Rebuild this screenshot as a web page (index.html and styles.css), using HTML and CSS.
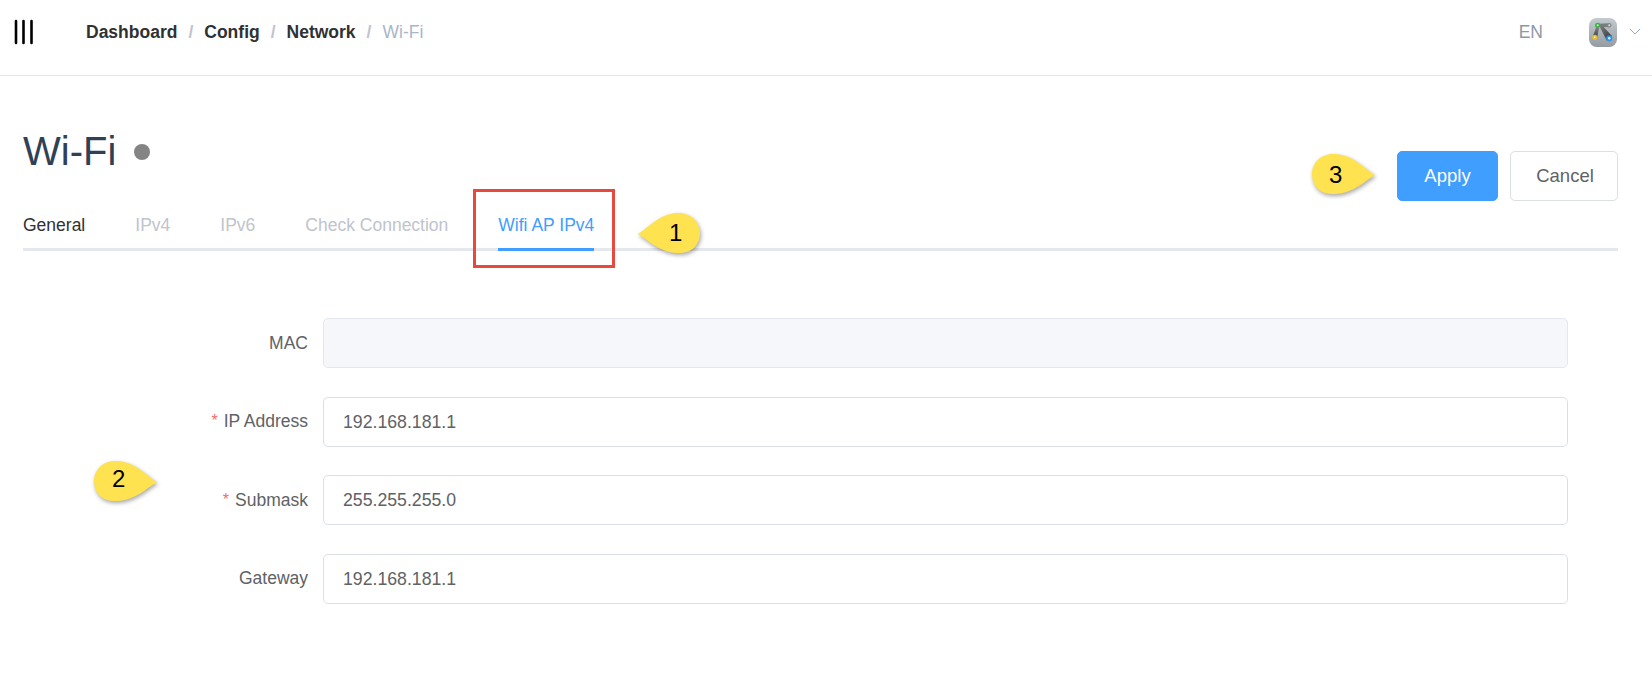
FILE: index.html
```html
<!DOCTYPE html>
<html lang="en">
<head>
<meta charset="utf-8">
<title>Wi-Fi</title>
<link rel="stylesheet" href="styles.css">
</head>
<body>
<header class="topbar">
  <svg class="menu-icon" width="20" height="26" viewBox="0 0 20 26"><path d="M2 2v22M9.5 2v22M17.5 2v22" stroke="#000" stroke-width="2.6" stroke-linecap="round" fill="none"/></svg>
  <nav class="crumbs">
    <a>Dashboard</a><i>/</i><a>Config</a><i>/</i><a>Network</a><i>/</i><span>Wi-Fi</span>
  </nav>
  <div class="lang">EN</div>
  <svg class="avatar" width="28" height="29" viewBox="0 0 29 30">
    <defs>
      <linearGradient id="av" x1="0" y1="0" x2="0" y2="1"><stop offset="0" stop-color="#c4cbcf"/><stop offset="1" stop-color="#949ca1"/></linearGradient>
      <linearGradient id="wa" x1="0" y1="0" x2="1" y2="1"><stop offset="0" stop-color="#85888b"/><stop offset="1" stop-color="#2b2c2e"/></linearGradient>
      <linearGradient id="wb" x1="0" y1="0" x2="0" y2="1"><stop offset="0" stop-color="#8a8d90"/><stop offset="1" stop-color="#3f4042"/></linearGradient>
    </defs>
    <rect width="29" height="30" rx="8" fill="url(#av)"/>
    <path d="M9 6 L21 5.5 L21 9.5 L9 9Z" fill="#7a7d80"/>
    <path d="M8 8 L10.5 9 L8.5 20 L4 19Z" fill="url(#wb)"/>
    <path d="M10 7 L12.5 6.5 L24 19 L18.5 23.5Z" fill="url(#wa)"/>
    <circle cx="9" cy="7.5" r="2.7" fill="#35b53a"/><circle cx="9" cy="7.5" r="1" fill="#d8f5d8"/>
    <circle cx="21" cy="7.5" r="2.3" fill="#85888a"/><circle cx="21" cy="7.5" r="1" fill="#ddd"/>
    <circle cx="6" cy="20" r="2.7" fill="#e7b92e"/><circle cx="6" cy="20" r="1" fill="#fff3c4"/>
    <circle cx="21" cy="21" r="3.2" fill="#2b95e6"/><circle cx="21" cy="21" r="1.3" fill="#d5ecff"/>
  </svg>
  <svg class="chevron" width="12" height="7" viewBox="0 0 12 7"><path d="M.8.8 6 6 11.2.8" stroke="#97a8be" stroke-width="1" fill="none"/></svg>
</header>

<main class="page">
  <div class="page-head">
    <div class="head-left">
      <h1 class="title">Wi-Fi<span class="dot"></span></h1>
      <div class="tabs">
        <div class="tab tab-first">General</div>
        <div class="tab tab-muted">IPv4</div>
        <div class="tab tab-muted">IPv6</div>
        <div class="tab tab-muted">Check Connection</div>
        <div class="tab tab-active">Wifi AP IPv4</div>
      </div>
    </div>
    <div class="actions">
      <button class="btn btn-primary">Apply</button>
      <button class="btn">Cancel</button>
    </div>
  </div>

  <form class="form">
    <div class="row"><label class="label">MAC</label><input class="input input-disabled" disabled></div>
    <div class="row"><label class="label"><em>*</em>IP Address</label><input class="input" value="192.168.181.1"></div>
    <div class="row"><label class="label"><em>*</em>Submask</label><input class="input" value="255.255.255.0"></div>
    <div class="row"><label class="label">Gateway</label><input class="input" value="192.168.181.1"></div>
  </form>
</main>

<div class="redbox"></div>

<div class="bubble bubble-1">
  <svg width="70" height="48" viewBox="0 0 70 48"><path class="bubble-shape" d="M2 23 C12 17 23 3 41 2 C54 1 64 11 64 22 C64 35 54 43 41 42 C23 41 12 29 2 23Z"/></svg>
  <span class="bubble-num num-1">1</span>
</div>
<div class="bubble bubble-2">
  <svg width="70" height="48" viewBox="0 0 70 48"><path class="bubble-shape" d="M65 23 C55 17 44 3 25 2 C11 1 2 11 2 22 C2 35 11 43 25 42 C44 41 55 29 65 23Z"/></svg>
  <span class="bubble-num num-2">2</span>
</div>
<div class="bubble bubble-3">
  <svg width="70" height="48" viewBox="0 0 70 48"><path class="bubble-shape" d="M65 23 C55 17 44 3 25 2 C11 1 2 11 2 22 C2 35 11 43 25 42 C44 41 55 29 65 23Z"/></svg>
  <span class="bubble-num num-3">3</span>
</div>
</body>
</html>
```

FILE: styles.css
```css
* { box-sizing: border-box; }
html, body { margin: 0; padding: 0; background: #fff; }
body {
  width: 1652px;
  height: 682px;
  overflow: hidden;
  position: relative;
  font-family: "Liberation Sans", Arial, sans-serif;
  color: #303133;
}

.topbar {
  height: 76px;
  border-bottom: 1px solid #e6e6e6;
  display: flex;
  align-items: center;
  padding: 0 11px 0 14px;
}
.menu-icon { margin-top: -11px; flex: none; }
.crumbs {
  margin-left: 52px;
  margin-top: -11px;
  font-size: 17.5px;
  display: flex;
  align-items: center;
  flex: 1;
}
.crumbs a { font-weight: 700; color: #303133; }
.crumbs i { font-style: normal; color: #c0c4cc; font-weight: 700; margin: 0 11px; }
.crumbs span { color: #a9b6c8; }
.lang { font-size: 17.5px; color: #8f98a5; margin-top: -10px; margin-right: 46px; }
.avatar { margin-top: -10px; flex: none; }
.chevron { margin: -12px 0 0 12px; flex: none; }

.page { padding: 0 34px 0 23px; }
.page-head {
  display: flex;
  align-items: flex-end;
  justify-content: space-between;
  border-bottom: 3px solid #e4e7ed;
  height: 175px;
}
.head-left { display: flex; flex-direction: column; }
.title {
  margin: 0 0 31px;
  font-size: 40px;
  line-height: 46px;
  font-weight: 400;
  color: #304156;
  display: flex;
  align-items: center;
}
.dot {
  width: 16px;
  height: 16px;
  border-radius: 50%;
  background: #848484;
  margin: 2px 0 0 18px;
}
.tabs { display: flex; gap: 50px; font-size: 17.5px; margin-bottom: -3px; }
.tab { height: 46px; line-height: 40px; }
.tab-first { color: #303133; }
.tab-muted { color: #c0c4cc; }
.tab-active { color: #409eff; border-bottom: 3px solid #409eff; }

.actions { display: flex; gap: 12px; margin-bottom: 47px; }
.btn {
  width: 108px;
  height: 50px;
  border: 1px solid #dcdfe6;
  border-radius: 5px;
  background: #fff;
  color: #606266;
  font-family: inherit;
  font-size: 18.5px;
  padding: 0 0 0 2px;
}
.btn-primary { width: 101px; padding: 0; background: #409eff; border-color: #409eff; color: #fff; }

.form { margin-top: 67px; padding-right: 50px; display: flex; flex-direction: column; gap: 28.67px; }
.row { display: flex; align-items: center; }
.label {
  width: 285px;
  flex: none;
  text-align: right;
  font-size: 17.5px;
  color: #606266;
}
.label em { font-style: normal; font-size: 16px; vertical-align: 1px; color: #f56c6c; margin-right: 6px; }
.input {
  flex: 1;
  min-width: 0;
  margin-left: 15px;
  height: 50px;
  border: 1px solid #dcdfe6;
  border-radius: 5px;
  padding: 1px 19px 0;
  font-family: inherit;
  font-size: 17.7px;
  color: #606266;
  background: #fff;
  outline: none;
}
.input-disabled { background: #f5f7fa; border-color: #e4e7ed; }

.redbox {
  position: absolute;
  left: 473px;
  top: 189px;
  width: 142px;
  height: 79px;
  border: 3px solid #e8493f;
}

.bubble { position: absolute; width: 70px; height: 48px; }
.bubble svg { display: block; overflow: visible; }
.bubble-shape { fill: #ffe24f; filter: drop-shadow(1px 2px 2px rgba(0,0,0,.35)); }
.bubble-num {
  position: absolute;
  font-size: 24px;
  line-height: 32px;
  color: #000;
}
.bubble-1 { left: 636px; top: 211px; }
.bubble-2 { left: 92px; top: 459px; }
.bubble-3 { left: 1310px; top: 152px; }
.num-1 { left: 33px; top: 6px; }
.num-2 { left: 20px; top: 4px; }
.num-3 { left: 19px; top: 7px; }
```
